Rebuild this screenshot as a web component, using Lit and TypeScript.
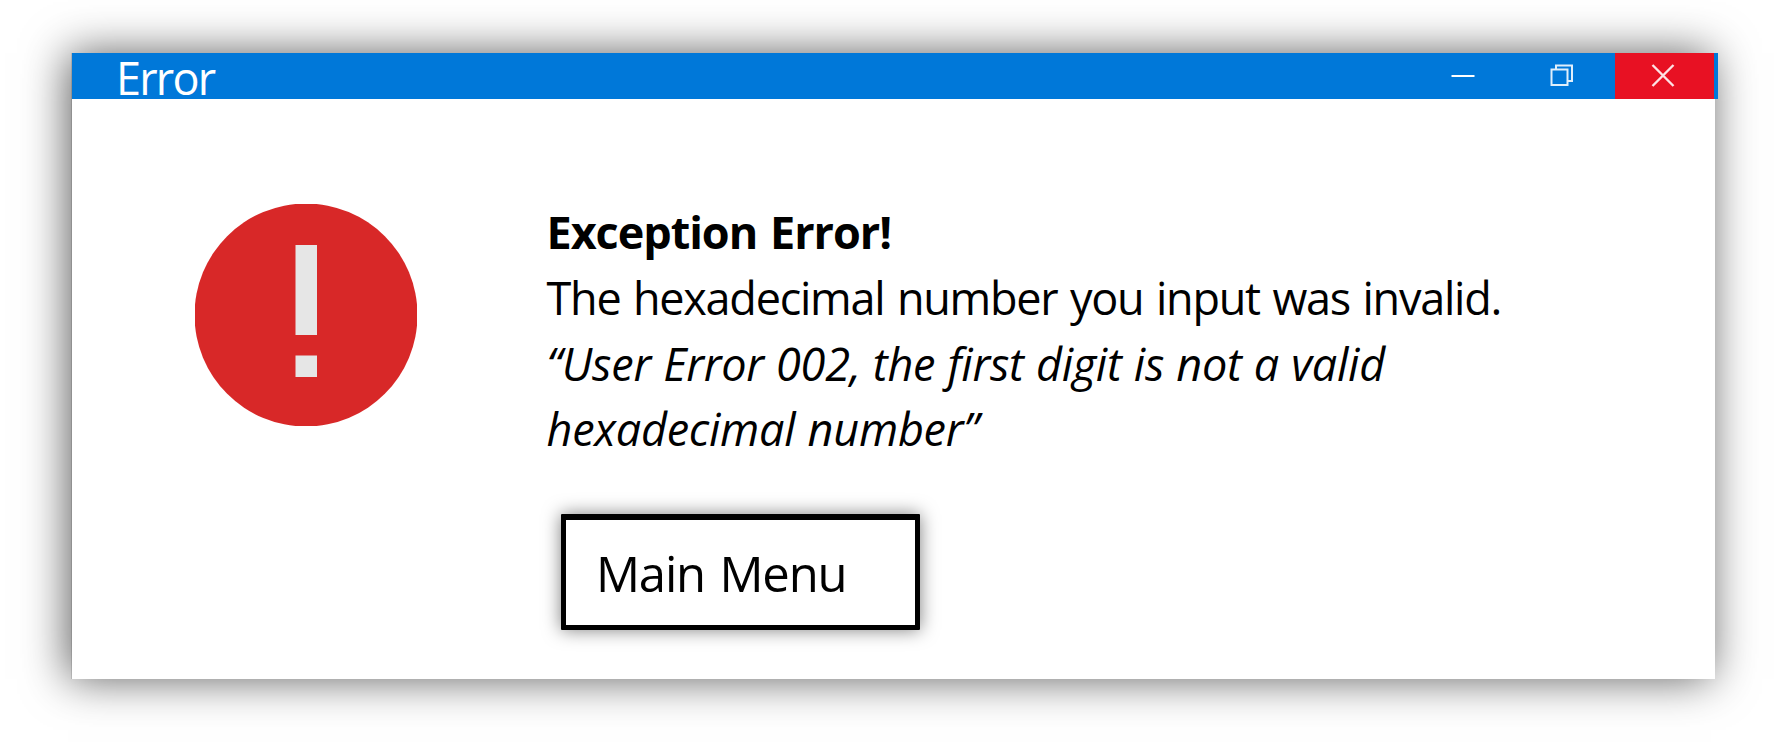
import { LitElement, html, css } from "lit";
import { customElement } from "lit/decorators.js";

@customElement("app-root")
export class AppRoot extends LitElement {
  static styles = css`
    :host {
      display: block;
      box-sizing: border-box;
      width: 1784px;
      height: 755px;
      padding: 53px 0 0 72px;
      overflow: hidden;
      background: #fff;
      color: #000;
      font-family: "Segoe UI", "Open Sans", "Noto Sans", sans-serif;
    }
    .window {
      width: 1643px;
      height: 626px;
      background: #fff;
      box-shadow: -4px 0 42px 0 rgba(0, 0, 0, 0.63), -1px 0 0 rgba(0, 0, 0, 0.12);
    }
    .bar {
      display: flex;
      width: 1646px;
      height: 46px;
      background: #0078d9;
      color: #fff;
    }
    .title {
      flex: 1;
      padding-left: 44px;
      font-size: 45px;
      line-height: 50px;
      font-weight: 400;
      letter-spacing: -1.8px;
      white-space: nowrap;
    }
    .control {
      display: block;
      width: 99px;
      height: 46px;
    }
    .close {
      background: #e81123;
      margin-right: 4px;
    }
    .body {
      display: flex;
      padding: 100px 0 0 123px;
    }
    .badge {
      display: block;
      flex: none;
      width: 222px;
      height: 222px;
      margin-top: 5px;
    }
    .content {
      display: flex;
      flex-direction: column;
      align-items: flex-start;
      margin-left: 129.5px;
    }
    .line {
      margin: 0;
      height: 65.75px;
      line-height: 65.75px;
      font-size: 45px;
      font-weight: 400;
      letter-spacing: -1.25px;
      word-spacing: 2.1px;
      white-space: nowrap;
    }
    .heading {
      font-weight: 700;
      letter-spacing: -1.05px;
      word-spacing: 2.2px;
    }
    .quote {
      font-style: italic;
      letter-spacing: -0.25px;
      word-spacing: 0.8px;
    }
    .menu {
      box-sizing: border-box;
      width: 359px;
      height: 116px;
      margin: 52px 0 0 14.5px;
      padding: 1px 0 0 30px;
      border: 5px solid #000;
      border-top-width: 6px;
      border-radius: 1px;
      background: #fff;
      box-shadow: 0 0 18px rgba(0, 0, 0, 0.5);
      color: #000;
      font: 400 49px/104px "Segoe UI", "Open Sans", "Noto Sans", sans-serif;
      letter-spacing: -1.2px;
      word-spacing: 3px;
      text-align: left;
      white-space: nowrap;
    }
  `;

  render() {
    return html`
      <div class="window">
        <div class="bar">
          <div class="title">Error</div>
          <svg class="control" viewBox="0 0 99 46" fill="none" stroke="#fff">
            <path d="M34.5 23H57.5" stroke-width="2" />
          </svg>
          <svg class="control" viewBox="0 0 99 46" fill="none" stroke="#fff" stroke-opacity=".88" stroke-width="2">
            <path d="M35.5 16.5H51.5V32H35.5ZM40 16.5V12.5H56V28H51.5" />
          </svg>
          <svg class="control close" viewBox="0 0 99 46" fill="none" stroke="#fff">
            <path d="M37.5 12L58.5 33M58.5 12L37.5 33" stroke-opacity=".88" stroke-width="2.4" />
          </svg>
        </div>
        <div class="body">
          <svg class="badge" viewBox="0 0 222 222">
            <circle cx="111" cy="111" r="111.5" fill="#d82828" />
            <path d="M100.5 41h21.5v90h-21.5zM100.5 151.5h21.5v21.5h-21.5z" fill="#e6e6e6" />
          </svg>
          <div class="content">
            <p class="line heading">Exception Error!</p>
            <p class="line">The hexadecimal number you input was invalid.</p>
            <p class="line quote">“User Error 002, the first digit is not a valid</p>
            <p class="line quote">hexadecimal number”</p>
            <button class="menu">Main Menu</button>
          </div>
        </div>
      </div>
    `;
  }
}
